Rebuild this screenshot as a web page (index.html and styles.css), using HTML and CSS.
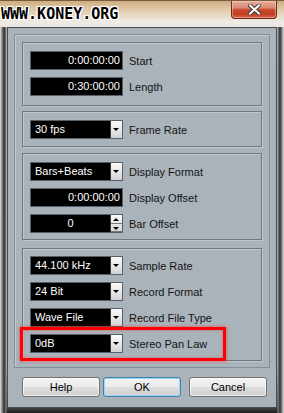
FILE: index.html
```html
<!DOCTYPE html>
<html lang="en">
<head>
    <meta charset="UTF-8">
    <meta name="viewport" content="width=device-width, initial-scale=1.0">
    <title>Project Setup</title>
    <link rel="stylesheet" href="styles.css">
</head>
<body>
    <div class="window">
        <!-- title bar -->
        <div class="titlebar">
            <span class="brand">WWW.KONEY.ORG</span>
            <button class="close-btn" aria-label="Close">
                <svg width="13" height="11" viewBox="0 0 13 11">
                    <path d="M2 1.5 L11 9.5 M11 1.5 L2 9.5" stroke="#3d3d3d" stroke-width="4" stroke-linecap="square"/>
                    <path d="M2 1.5 L11 9.5 M11 1.5 L2 9.5" stroke="#ffffff" stroke-width="2" stroke-linecap="square"/>
                </svg>
            </button>
        </div>

        <div class="frame">
            <div class="client">
                <div class="panel">
                    <div class="group group-time">
                        <div class="row">
                            <div class="field">0:00:00:00</div>
                            <span class="label">Start</span>
                        </div>
                        <div class="row">
                            <div class="field">0:30:00:00</div>
                            <span class="label">Length</span>
                        </div>
                    </div>

                    <div class="group group-rate">
                        <div class="row">
                            <div class="select"><span>30 fps</span><i class="arrow"></i></div>
                            <span class="label">Frame Rate</span>
                        </div>
                    </div>

                    <div class="group group-display">
                        <div class="row">
                            <div class="select"><span>Bars+Beats</span><i class="arrow"></i></div>
                            <span class="label">Display Format</span>
                        </div>
                        <div class="row">
                            <div class="field">0:00:00:00</div>
                            <span class="label">Display Offset</span>
                        </div>
                        <div class="row">
                            <div class="spin">
                                <span>0</span>
                                <div class="spin-btns"><i class="up"></i><i class="down"></i></div>
                            </div>
                            <span class="label">Bar Offset</span>
                        </div>
                    </div>

                    <div class="group group-audio">
                        <div class="row">
                            <div class="select"><span>44.100 kHz</span><i class="arrow"></i></div>
                            <span class="label">Sample Rate</span>
                        </div>
                        <div class="row">
                            <div class="select"><span>24 Bit</span><i class="arrow"></i></div>
                            <span class="label">Record Format</span>
                        </div>
                        <div class="row">
                            <div class="select"><span>Wave File</span><i class="arrow"></i></div>
                            <span class="label">Record File Type</span>
                        </div>
                        <!-- 강조 표시된 행 -->
                        <div class="row marked">
                            <div class="select"><span>0dB</span><i class="arrow"></i></div>
                            <span class="label">Stereo Pan Law</span>
                        </div>
                    </div>
                </div>

                <div class="buttons">
                    <button class="btn">Help</button>
                    <button class="btn btn-default">OK</button>
                    <button class="btn btn-cancel">Cancel</button>
                </div>
            </div>
        </div>
    </div>
</body>
</html>
```

FILE: styles.css
```css
* {
    margin: 0;
    padding: 0;
    box-sizing: border-box;
}

*::before,
*::after {
    box-sizing: border-box;
}

body {
    font-family: 'Liberation Sans', Arial, sans-serif;
    font-size: 11px;
    background-color: #ffffff;
}

.window {
    width: 284px;
    height: 413px;
    display: flex;
    flex-direction: column;
    background: linear-gradient(to bottom, #c9a87c 0, #d9bf98 6px, #e6d6bf 14px, #efebe4 22px, #d8d9da 40px, #c4c6c8 100%);
}

/* title bar */
.titlebar {
    height: 28px;
    display: flex;
    justify-content: space-between;
    align-items: flex-start;
    padding: 0 7px 0 1px;
    border-top: 1px solid #7a5c3a;
}

.brand {
    margin-top: 5px;
    font-family: 'DejaVu Sans Mono', monospace;
    font-weight: bold;
    font-size: 15px;
    line-height: 16px;
    color: #000;
    text-shadow: 1px 0 #fff, -1px 0 #fff, 0 1px #fff, 0 -1px #fff,
                 1px 1px #fff, -1px -1px #fff, 1px -1px #fff, -1px 1px #fff;
}

.close-btn {
    width: 46px;
    height: 18px;
    border: 1px solid #6a2c1f;
    border-top: none;
    border-radius: 0 0 4px 4px;
    background: linear-gradient(to bottom, #e9ab9a 0, #dc8a73 40%, #c9472b 52%, #c23e22 75%, #d4603f 100%);
    box-shadow: inset 0 0 0 1px rgba(255, 220, 210, 0.45);
    display: flex;
    align-items: center;
    justify-content: center;
}

.close-btn svg {
    display: block;
}

/* window frame around the client area */
.frame {
    flex: 1;
    padding: 0 7px 5px;
    background:
        linear-gradient(to right, #e2e2e2 0, #8c8c8c 2px, #2e2e2e 4px, #7c7c7c 6px, transparent 7px) left top / 7px 100% no-repeat,
        linear-gradient(to left, #e2e2e2 0, #8c8c8c 2px, #2e2e2e 4px, #7c7c7c 6px, transparent 7px) right top / 7px 100% no-repeat,
        linear-gradient(to bottom, #d6d7d8 0, #c9cacb 88%, #3c3c3c 99%, #1e1e1e 100%);
}

.client {
    height: 381px;
    background-color: #aab2ba;
    border: 1px solid #474d53;
    padding: 6px;
    display: flex;
    flex-direction: column;
}

.panel {
    height: 334px;
    border: 1px solid #858d95;
    box-shadow: inset 1px 1px 0 #c2c9d0;
    padding: 7px 7px 6px;
    display: flex;
    flex-direction: column;
}

.group {
    border: 1px solid #6f777f;
    box-shadow: inset 1px 1px 0 #bfc6cd, 1px 1px 0 #bfc6cd;
    padding: 8px 0 0 7px;
    display: flex;
    flex-direction: column;
    gap: 7px;
}

.group-time {
    height: 64px;
}

.group-rate {
    height: 36px;
    margin-top: 5px;
}

.group-display {
    height: 87px;
    margin-top: 6px;
}

.group-audio {
    height: 113px;
    margin-top: 8px;
    padding-top: 7px;
}

.row {
    display: flex;
    align-items: center;
    gap: 6px;
    height: 19px;
}

.label {
    color: #141414;
    white-space: nowrap;
}

/* black value fields */
.field,
.select,
.spin {
    width: 93px;
    height: 19px;
    background-color: #000;
    border: 1px solid #56606a;
    color: #fff;
    line-height: 17px;
}

.field {
    text-align: right;
    padding-right: 2px;
}

.select {
    display: flex;
}

.select span {
    flex: 1;
    padding-left: 4px;
}

.arrow,
.spin-btns {
    width: 12px;
    background: linear-gradient(to bottom, #fafafa 0, #e4e4e4 60%, #d2d2d2 100%);
    border-left: 1px solid #3a3a3a;
}

.arrow {
    position: relative;
}

.arrow::after {
    content: "";
    position: absolute;
    left: 2px;
    top: 7px;
    border-left: 3px solid transparent;
    border-right: 3px solid transparent;
    border-top: 3px solid #000;
}

.spin {
    display: flex;
}

.spin span {
    flex: 1;
    text-align: center;
}

.spin-btns {
    display: flex;
    flex-direction: column;
}

.spin-btns i {
    flex: 1;
    position: relative;
    border-bottom: 1px solid #777;
}

.spin-btns i::after {
    content: "";
    position: absolute;
    left: 2px;
    top: 3px;
    border-left: 3px solid transparent;
    border-right: 3px solid transparent;
}

.spin-btns .up::after {
    border-bottom: 3px solid #000;
}

.spin-btns .down::after {
    border-top: 3px solid #000;
}

/* red highlight round the pan law row */
.marked {
    position: relative;
}

.marked::before {
    content: "";
    position: absolute;
    left: -10px;
    top: -7px;
    width: 206px;
    height: 34px;
    border: 3px solid #ff0000;
    box-shadow: 0 0 3px rgba(255, 0, 0, 0.6), inset 0 0 3px rgba(255, 0, 0, 0.4);
}

/* buttons */
.buttons {
    display: flex;
    margin-top: 9px;
    padding-left: 8px;
}

.btn {
    width: 78px;
    height: 20px;
    font-family: 'Liberation Sans', Arial, sans-serif;
    font-size: 11px;
    color: #000;
    border: 1px solid #707070;
    border-radius: 3px;
    background: linear-gradient(to bottom, #f2f2f2 0, #ebebeb 48%, #dddddd 52%, #cfcfcf 100%);
    box-shadow: inset 0 0 0 1px rgba(255, 255, 255, 0.7);
}

.btn-default {
    margin-left: 3px;
    border-color: #3c7fb1;
    box-shadow: inset 0 0 0 1px #9fd6f4;
}

.btn-cancel {
    margin-left: 8px;
}
```
